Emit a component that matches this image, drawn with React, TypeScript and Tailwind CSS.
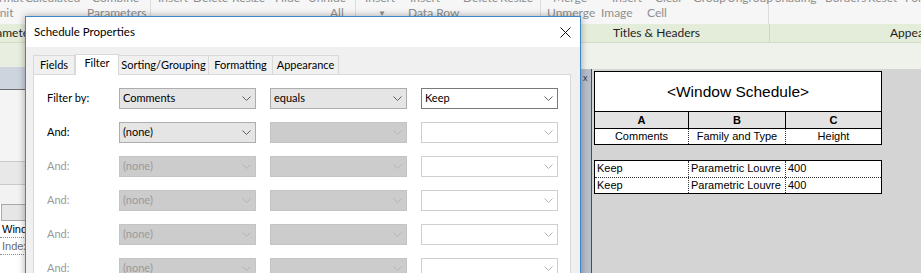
import React from 'react';

type Tone = 'combo' | 'comboOff' | 'field' | 'fieldOff';

interface FilterRow {
  label: string;
  enabled: boolean;
  field: string;
  fieldTone: Tone;
  op: string;
  opTone: Tone;
  value: string;
  valueTone: Tone;
}

const rows: FilterRow[] = [
  { label: 'Filter by:', enabled: true, field: 'Comments', fieldTone: 'combo', op: 'equals', opTone: 'combo', value: 'Keep', valueTone: 'field' },
  { label: 'And:', enabled: true, field: '(none)', fieldTone: 'combo', op: '', opTone: 'comboOff', value: '', valueTone: 'fieldOff' },
  { label: 'And:', enabled: false, field: '(none)', fieldTone: 'comboOff', op: '', opTone: 'comboOff', value: '', valueTone: 'fieldOff' },
  { label: 'And:', enabled: false, field: '(none)', fieldTone: 'comboOff', op: '', opTone: 'comboOff', value: '', valueTone: 'fieldOff' },
  { label: 'And:', enabled: false, field: '(none)', fieldTone: 'comboOff', op: '', opTone: 'comboOff', value: '', valueTone: 'fieldOff' },
  { label: 'And:', enabled: false, field: '(none)', fieldTone: 'comboOff', op: '', opTone: 'comboOff', value: '', valueTone: 'fieldOff' },
];

const toneClass: Record<Tone, string> = {
  combo: 'bg-[#e5e5e5] border-[#adadad] text-black',
  comboOff: 'bg-[#cccccc] border-[#c4c4c4] text-[#9a9a9a]',
  field: 'bg-white border-[#7a7a7a] text-black',
  fieldOff: 'bg-white border-[#cfcfcf] text-[#9a9a9a]',
};

function Chevron({ light }: { light: boolean }) {
  return (
    <svg width="9" height="5" viewBox="0 0 9 5" className="shrink-0">
      <polyline points="0.5,0.5 4.5,4.5 8.5,0.5" fill="none" stroke={light ? '#b4b4b4' : '#5f5f5f'} strokeWidth="1" />
    </svg>
  );
}

function Combo({ text, tone }: { text: string; tone: Tone }) {
  const light = tone === 'comboOff' || tone === 'fieldOff';
  return (
    <div className={`w-[137px] h-[21px] border flex items-center justify-between pl-[3px] pr-[4px] ${toneClass[tone]}`}>
      <span>{text}</span>
      <Chevron light={light} />
    </div>
  );
}

// background ribbon, mostly hidden under the dialog
function Ribbon() {
  return (
    <div className="flex h-[24px] bg-[#f6f6f6] text-[12px] text-[#8e8e8e] whitespace-nowrap overflow-hidden">
      <div className="w-[151px] border-r border-[#dcdcdc] shrink-0">
        <div className="flex -mt-[9px] h-[15px] leading-[14px]">
          <span className="-ml-[14px] w-[39px] shrink-0">Format</span>
          <span className="w-[67px] shrink-0">Calculated</span>
          <span className="shrink-0">Combine</span>
        </div>
        <div className="flex h-[14px] leading-[14px]">
          <span className="-ml-[9px] w-[96px] shrink-0">Unit</span>
          <span className="shrink-0">Parameters</span>
        </div>
      </div>
      <div className="w-[205px] border-r border-[#dcdcdc] shrink-0">
        <div className="flex -mt-[9px] h-[15px] leading-[14px] pl-[7px]">
          <span className="w-[35px] shrink-0">Insert</span>
          <span className="w-[39px] shrink-0">Delete</span>
          <span className="w-[43px] shrink-0">Resize</span>
          <span className="w-[33px] shrink-0">Hide</span>
          <span className="shrink-0">Unhide</span>
        </div>
        <div className="flex h-[14px] leading-[14px] pl-[179px]">
          <span>All</span>
        </div>
      </div>
      <div className="w-[185px] border-r border-[#dcdcdc] shrink-0">
        <div className="flex -mt-[9px] h-[15px] leading-[14px] pl-[9px]">
          <span className="w-[45px] shrink-0">Insert</span>
          <span className="w-[53px] shrink-0">Insert</span>
          <span className="w-[37px] shrink-0">Delete</span>
          <span className="shrink-0">Resize</span>
        </div>
        <div className="flex h-[14px] leading-[14px] pl-[22px]">
          <span className="w-[30px] shrink-0 text-[8px]">▼</span>
          <span className="shrink-0">Data Row</span>
        </div>
      </div>
      <div className="w-[228px] border-r border-[#dcdcdc] shrink-0">
        <div className="flex -mt-[9px] h-[15px] leading-[14px] pl-[12px]">
          <span className="w-[59px] shrink-0">Merge</span>
          <span className="w-[43px] shrink-0">Insert</span>
          <span className="w-[38px] shrink-0">Clear</span>
          <span className="w-[34px] shrink-0">Group</span>
          <span className="shrink-0">Ungroup</span>
        </div>
        <div className="flex h-[14px] leading-[14px] pl-[6px]">
          <span className="w-[54px] shrink-0">Unmerge</span>
          <span className="w-[46px] shrink-0">Image</span>
          <span className="shrink-0">Cell</span>
        </div>
      </div>
      <div className="flex-1">
        <div className="flex -mt-[9px] h-[15px] leading-[14px] pl-[6px]">
          <span className="w-[50px] shrink-0">Shading</span>
          <span className="w-[43px] shrink-0">Borders</span>
          <span className="w-[37px] shrink-0">Reset</span>
          <span className="shrink-0">Font</span>
        </div>
      </div>
    </div>
  );
}

function PanelBar() {
  return (
    <div className="flex h-[19px] bg-[#e4edd9] border-b border-[#d2dcc7] text-[12px] text-[#1e1e1e] leading-[18px] whitespace-nowrap overflow-hidden">
      <div className="w-[541px] shrink-0">
        <span className="-ml-[21px] inline-block">Parameters</span>
      </div>
      <div className="w-[229px] shrink-0 border-r border-[#cdd6c3] text-center pl-[3px]">Titles &amp; Headers</div>
      <div className="flex-1 pl-[120px]">Appearance</div>
    </div>
  );
}

function PropertiesPane() {
  return (
    <div className="w-[580px] shrink-0 flex flex-col bg-white text-[11px]">
      <div className="h-[24px] bg-[#e8efe0]" />
      <div className="h-[23px] bg-[#cdd4de] border-b border-[#6b6b6b]" />
      <div className="h-[72px] bg-[#f4f4f4] border-b border-[#c9c9c9]" />
      <div className="h-[23px] bg-[#e8e8e8] border-b border-[#c9c9c9]" />
      <div className="h-[19px] bg-[#f2f2f2]" />
      <div className="h-[17px] bg-[#e6e6e6] border border-[#a9a9a9] ml-[1px]" />
      <div className="h-[17px] pl-[2px] leading-[16px] text-black font-['Liberation_Sans',Arial,sans-serif] border-b border-dotted border-[#8a8a8a]">Window</div>
      <div className="h-[17px] pl-[2px] leading-[16px] text-[#6a6a6a] font-['Liberation_Sans',Arial,sans-serif] border-b border-dotted border-[#8a8a8a]">Index</div>
      <div className="flex-1" />
    </div>
  );
}

function ScheduleView() {
  return (
    <div className="flex-1 flex flex-col">
      <div className="h-[26px] bg-[#eef2ea]" />
      <div className="flex-1 flex">
        <div className="w-[12px] bg-[#b7bec9] border-r border-[#4d4d4d] text-[9px] text-[#333] leading-[14px] pl-[3px] pt-[2px]">x</div>
        <div className="flex-1 bg-[#d4d4d4] pl-[2px] pt-[2px] font-['Liberation_Sans',Arial,sans-serif] text-[11px] text-black">
          <div className="w-[288px] border border-black bg-white">
            <div className="h-[39px] flex items-center justify-center text-[15.5px]">&lt;Window Schedule&gt;</div>
            <div className="flex h-[17px] border-t border-black bg-[#e3e3e3] font-bold leading-[16px] text-center">
              <div className="w-[94px] border-r border-black">A</div>
              <div className="w-[97px] border-r border-black">B</div>
              <div className="flex-1">C</div>
            </div>
            <div className="flex h-[16px] border-t border-black leading-[15px] text-center">
              <div className="w-[94px] border-r border-dotted border-[#333]">Comments</div>
              <div className="w-[97px] border-r border-dotted border-[#333]">Family and Type</div>
              <div className="flex-1">Height</div>
            </div>
          </div>
          <div className="h-[15px]" />
          <div className="w-[288px] border border-black bg-white">
            {['Keep', 'Keep'].map((c, i) => (
              <div key={i} className={`flex h-[16px] leading-[15px] ${i > 0 ? 'border-t border-dotted border-[#333]' : ''}`}>
                <div className="w-[94px] border-r border-dotted border-[#333] pl-[2px]">{c}</div>
                <div className="w-[97px] border-r border-dotted border-[#333] pl-[2px]">Parametric Louvre</div>
                <div className="flex-1 pl-[2px]">400</div>
              </div>
            ))}
          </div>
        </div>
      </div>
    </div>
  );
}

function ScheduleDialog() {
  const tabs = [
    { name: 'Fields', w: 'w-[42px]' },
    { name: 'Filter', w: 'w-[44px]' },
    { name: 'Sorting/Grouping', w: 'w-[91px]' },
    { name: 'Formatting', w: 'w-[65px]' },
    { name: 'Appearance', w: 'w-[67px]' },
  ];
  return (
    <div className="absolute left-[25px] top-[16px] w-[556px] h-[270px] border border-[#3b86cd] bg-[#f0f0f0] shadow-[0_0_7px_rgba(0,0,0,0.35)] text-[11px] text-black">
      <div className="h-[30px] bg-white flex items-center justify-between pl-[8px] pr-[9px]">
        <span className="text-[11.5px]">Schedule Properties</span>
        <svg width="11" height="11" viewBox="0 0 11 11">
          <path d="M0.5 0.5 L10.5 10.5 M10.5 0.5 L0.5 10.5" stroke="#111" strokeWidth="1" />
        </svg>
      </div>
      <div className="pl-[7px] pr-[9px] pt-[7px]">
        <div className="flex items-end h-[20px]">
          {tabs.map((t) =>
            t.name === 'Filter' ? (
              <div key={t.name} className={`${t.w} h-[21px] -mb-px relative z-10 bg-white border border-b-0 border-[#d9d9d9] flex items-center justify-center pb-[3px]`}>
                {t.name}
              </div>
            ) : (
              <div key={t.name} className={`${t.w} h-[19px] bg-[#f0f0f0] border border-b-0 border-[#d9d9d9] -ml-px first:ml-0 flex items-center justify-center`}>
                {t.name}
              </div>
            )
          )}
        </div>
        <div className="h-[220px] bg-white border border-[#d9d9d9] pl-[13px] pt-[13px] flex flex-col gap-[13px]">
          {rows.map((r, i) => (
            <div key={i} className="flex items-center h-[21px]">
              <div className={`w-[72px] ${r.enabled ? 'text-black' : 'text-[#9a9a9a]'}`}>{r.label}</div>
              <Combo text={r.field} tone={r.fieldTone} />
              <div className="w-[14px]" />
              <Combo text={r.op} tone={r.opTone} />
              <div className="w-[14px]" />
              <Combo text={r.value} tone={r.valueTone} />
            </div>
          ))}
        </div>
      </div>
    </div>
  );
}

export default function App() {
  return (
    <div className="relative w-[921px] h-[273px] overflow-hidden bg-[#f0f0f0] font-['Lato',sans-serif]">
      <Ribbon />
      <PanelBar />
      <div className="flex h-[230px]">
        <PropertiesPane />
        <ScheduleView />
      </div>
      <ScheduleDialog />
    </div>
  );
}
